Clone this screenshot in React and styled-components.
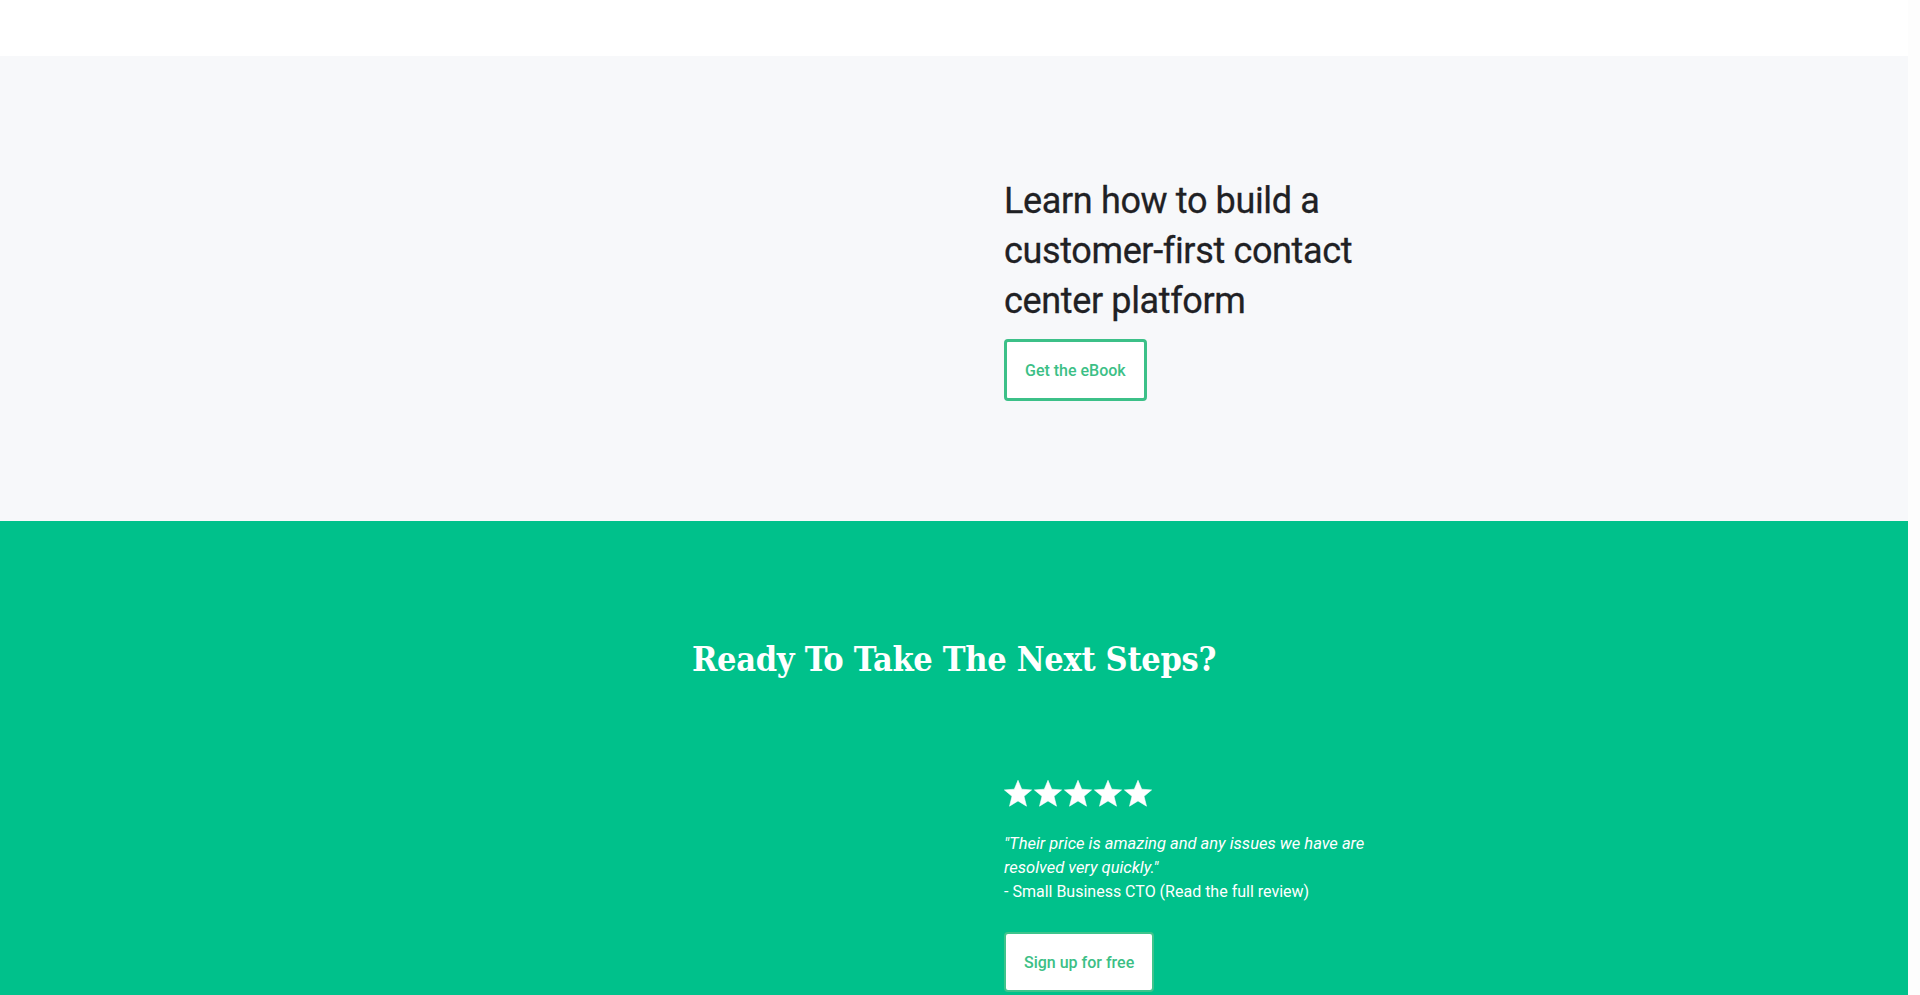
import React from "react";
import styled, { createGlobalStyle } from "styled-components";

const GlobalStyle = createGlobalStyle`
  html, body { margin: 0; padding: 0; background: #ffffff; }
  body { font-family: Roboto, "Liberation Sans", Arial, sans-serif; color: #212529; }
  * { box-sizing: border-box; }
`;

const Page = styled.div`
  display: grid;
  grid-template-columns: 1fr 12px;
  min-height: 995px;
`;

const Main = styled.main`
  display: flex;
  flex-direction: column;
  min-width: 0;
  box-shadow: inset -14px 0 12px -12px rgba(0, 0, 0, 0.05);
`;

const ScrollGutter = styled.div`
  background: #fdfdfd;
`;

const TopBar = styled.header`
  height: 56px;
  background: #ffffff;
`;

const Section = styled.section`
  background: ${(p) => p.$bg};
  padding: ${(p) => p.$pad};
`;

const Container = styled.div`
  width: 1140px;
  margin: 0 auto;
`;

const Row = styled.div`
  display: grid;
  grid-template-columns: 1fr 1fr;
`;

const MediaCol = styled.div``;

const TextCol = styled.div`
  padding-left: 50px;
  display: flex;
  flex-direction: column;
  align-items: flex-start;
  max-width: 462px;
`;

const Headline = styled.h2`
  margin: 0;
  font-family: Roboto, "Liberation Sans", sans-serif;
  font-weight: 400;
  font-size: 36px;
  letter-spacing: -0.01em;
  line-height: 50px;
  color: #1f2124;
  -webkit-text-stroke: 0.3px #1f2124;
`;

const OutlineButton = styled.a`
  display: inline-flex;
  align-items: center;
  justify-content: center;
  height: ${(p) => p.$h || "62px"};
  padding: 0 18px;
  margin-top: ${(p) => p.$mt || "0"};
  background: #ffffff;
  border: ${(p) => p.$border || "3px solid #3cc088"};
  border-radius: 4px;
  color: #3cbf86;
  font-family: Roboto, "Liberation Sans", sans-serif;
  font-weight: 500;
  font-size: 16px;
  text-decoration: none;
  cursor: pointer;
`;

const CtaTitle = styled.h2`
  margin: 0;
  text-align: center;
  font-family: "Roboto Slab", "DejaVu Serif Condensed", "DejaVu Serif", serif;
  font-stretch: semi-condensed;
  font-weight: 700;
  font-size: 34px;
  letter-spacing: -0.3px;
  line-height: 44px;
  color: #ffffff;
`;

const Testimonial = styled.div`
  margin-top: 99px;
`;

const Stars = styled.div`
  display: flex;
  gap: 2px;
  height: 27px;
`;

const Quote = styled.p`
  margin: 25px 0 0;
  font-family: Roboto, "Liberation Sans", sans-serif;
  font-size: 16px;
  line-height: 24px;
  color: #ffffff;
`;

const QuoteText = styled.em`
  font-style: italic;
  font-size: 16.5px;
  display: block;
`;

const Attribution = styled.span`
  display: block;
`;

const Star = () => (
  <svg width="28" height="27" viewBox="0 0 28 27" aria-hidden="true">
    <path
      d="M14 0.3 L17.7 9.2 L27.6 9.9 L20 16.3 L22.5 26.2 L14 20.9 L5.5 26.2 L8 16.3 L0.4 9.9 L10.3 9.2 Z"
      fill="#ffffff"
      stroke="#ffffff"
      strokeWidth="0.6"
      strokeLinejoin="round"
    />
  </svg>
);

export default function App() {
  return (
    <>
      <GlobalStyle />
      <Page>
        <Main>
          <TopBar />
          <Section $bg="#f7f8fa" $pad="120px 0 120px">
            <Container>
              <Row>
                <MediaCol />
                <TextCol>
                  <Headline>
                    Learn how to build a customer-first contact center platform
                  </Headline>
                  <OutlineButton $mt="13px">Get the eBook</OutlineButton>
                </TextCol>
              </Row>
            </Container>
          </Section>
          <Section $bg="#00c18b" $pad="116px 0 40px">
            <Container>
              <CtaTitle>Ready To Take The Next Steps?</CtaTitle>
              <Testimonial>
                <Row>
                  <MediaCol />
                  <TextCol>
                    <Stars>
                      <Star />
                      <Star />
                      <Star />
                      <Star />
                      <Star />
                    </Stars>
                    <Quote>
                      <QuoteText>
                        "Their price is amazing and any issues we have are resolved very quickly."
                      </QuoteText>
                      <Attribution>- Small Business CTO (Read the full review)</Attribution>
                    </Quote>
                    <OutlineButton $mt="28px" $h="60px" $border="2px solid #3fc48c">
                      Sign up for free
                    </OutlineButton>
                  </TextCol>
                </Row>
              </Testimonial>
            </Container>
          </Section>
        </Main>
        <ScrollGutter />
      </Page>
    </>
  );
}
